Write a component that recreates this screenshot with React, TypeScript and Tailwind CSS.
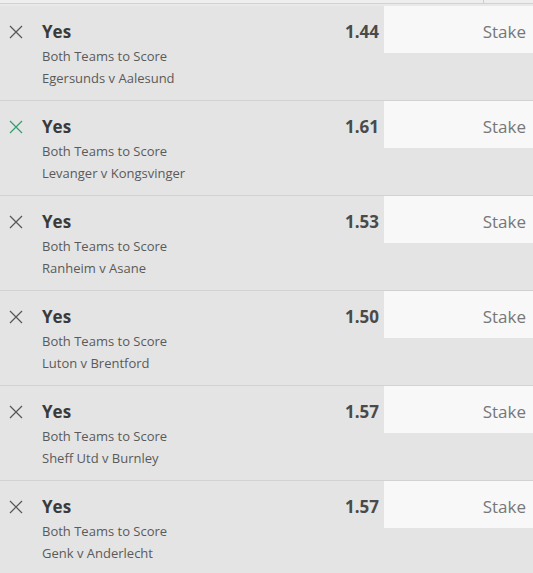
import React from 'react';

interface Bet {
  match: string;
  odds: string;
  active?: boolean;
}

const bets: Bet[] = [
  { match: 'Egersunds v Aalesund', odds: '1.44' },
  { match: 'Levanger v Kongsvinger', odds: '1.61', active: true },
  { match: 'Ranheim v Asane', odds: '1.53' },
  { match: 'Luton v Brentford', odds: '1.50' },
  { match: 'Sheff Utd v Burnley', odds: '1.57' },
  { match: 'Genk v Anderlecht', odds: '1.57' },
];

const CloseIcon = ({ active }: { active?: boolean }) => (
  <svg width="14" height="14" viewBox="0 0 14 14" className={active ? 'text-[#2f9e6f]' : 'text-[#555555]'}>
    <path d="M1 1L13 13M13 1L1 13" stroke="currentColor" strokeWidth="1.2" fill="none" />
  </svg>
);

const BetRow = ({ bet }: { bet: Bet }) => (
  <div className="flex h-[95px] border-b border-[#d2d2d2] bg-[#e4e4e4]">
    <div className="w-[42px] flex justify-start pt-[19px] pl-[9px]">
      <CloseIcon active={bet.active} />
    </div>
    <div className="flex-1 pt-[14px]">
      <div className="text-[17px] font-bold text-[#3a3a3a] leading-[24px]">Yes</div>
      <div className="text-[13px] text-[#5a5a5a] leading-[22px] mt-[1px]">Both Teams to Score</div>
      <div className="text-[13px] text-[#5a5a5a] leading-[22px]">{bet.match}</div>
    </div>
    <div className="pt-[14px] pr-[5px] text-[17px] font-bold text-[#4a4a4a] leading-[24px]">{bet.odds}</div>
    <div className="w-[149px] h-[47px] bg-[#f8f8f8] flex items-center justify-end pt-[4px] pr-[7px] text-[17px] text-[#777777]">
      Stake
    </div>
  </div>
);

export default function App() {
  return (
    <div className="w-[533px] h-[573px] overflow-hidden bg-[#e4e4e4]" style={{ fontFamily: '"Open Sans", "Noto Sans", sans-serif' }}>
      <div className="h-[4px] bg-[#eeeeee] border-b border-[#d2d2d2] flex justify-end">
        <div className="w-[50px] h-full border-l border-[#cfcfcf]" />
      </div>
      <div className="h-[2px] bg-[#e9e9e9]" />
      {bets.map((b, i) => (
        <BetRow key={i} bet={b} />
      ))}
    </div>
  );
}
